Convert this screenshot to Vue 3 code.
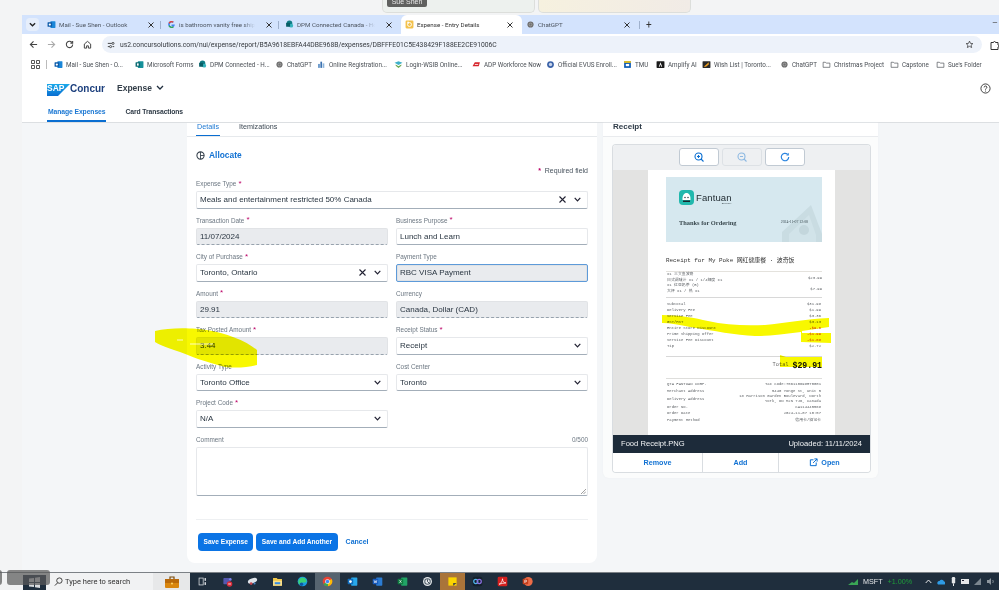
<script setup>
import { h } from 'vue'

const icons = {
  mail: [['rect',{x:6,y:2,width:9,height:12,rx:1,fill:'#1a86d8'}],['rect',{x:1,y:4,width:8,height:8,rx:1,fill:'#0c5aa8'}],['circle',{cx:5,cy:8,r:2,fill:'#fff'}]],
  google: [['path',{d:'M14 8.2H8v2.4h3.4A3.6 3.6 0 1 1 10.4 5l1.7-1.7A6 6 0 1 0 14 8.2z',fill:'#4285f4'}],['path',{d:'M2.6 5.2 4.7 6.8A3.6 3.6 0 0 1 10.4 5l1.7-1.7a6 6 0 0 0-9.500 1.900z',fill:'#ea4335'}],['path',{d:'M2.600 10.800 4.700 9.200a3.600 3.600 0 0 0 5.700 1.800l1.700 1.700a6 6 0 0 1-9.500-1.900z',fill:'#34a853'}]],
  share: [['circle',{cx:8,cy:6,r:5,fill:'#0f7c85'}],['circle',{cx:11,cy:10,r:3.500,fill:'#36b3bd'}],['rect',{x:2,y:5,width:7,height:7,rx:1,fill:'#075e66'}]],
  concur: [['rect',{x:1,y:1,width:14,height:14,rx:2,fill:'#f3c24d'}],['circle',{cx:8,cy:8,r:3.500,fill:'none',stroke:'#fff','stroke-width':1.600}],['rect',{x:4,y:3,width:3,height:3,fill:'#fff'}]],
  gpt: [['circle',{cx:8,cy:8,r:5.500,fill:'#6f6f6f'}],['circle',{cx:8,cy:8,r:2.500,fill:'none',stroke:'#bbb','stroke-width':1}]],
  forms: [['rect',{x:5,y:2,width:10,height:12,rx:1,fill:'#16909a'}],['rect',{x:1,y:4,width:8,height:8,rx:1,fill:'#0b6a72'}],['rect',{x:3.500,y:6,width:3,height:4,fill:'#fff'}]],
  reg: [['rect',{x:2,y:7,width:3,height:7,fill:'#5a8fc6'}],['rect',{x:6,y:3,width:3,height:11,fill:'#3b72b0'}],['rect',{x:10,y:6,width:3,height:8,fill:'#8db4da'}]],
  wsib: [['path',{d:'M1 5 8 2l7 3-7 4z',fill:'#3eb0c9'}],['path',{d:'M3 8l5 3 5-3v2l-5 4-5-4z',fill:'#6aa84f'}]],
  adp: [['path',{d:'M1 11 5 4h9l-2 7z',fill:'#d6232a'}],['rect',{x:5,y:7,width:6,height:1.500,fill:'#fff'}]],
  evus: [['circle',{cx:8,cy:8,r:6,fill:'#3a62a8'}],['circle',{cx:8,cy:8,r:3,fill:'#c8d4ea'}]],
  tmu: [['rect',{x:2,y:2,width:12,height:12,fill:'#0d5bb5'}],['rect',{x:2,y:2,width:12,height:3,fill:'#f6c915'}],['rect',{x:5,y:7,width:6,height:4,fill:'#fff'}]],
  amp: [['rect',{x:1,y:2,width:14,height:12,rx:1,fill:'#1c1c1c'}],['path',{d:'M8 4 5 12h1.500L8 8l1.500 4H11z',fill:'#fff'}]],
  wish: [['rect',{x:1,y:2,width:14,height:12,rx:1,fill:'#2a2a2a'}],['path',{d:'M3 12 12 4v4l-5 4z',fill:'#f0a020'}]],
  folder: [['path',{d:'M2 4h4l1.500 1.500H14v7.500H2z',fill:'none',stroke:'#4a4f55','stroke-width':1.200}]],
  star: [['path',{d:'M8 2l1.800 4 4.200.4-3.200 2.800 1 4.200L8 11.200 4.200 13.400l1-4.200L2 6.400 6.200 6z',fill:'none',stroke:'#333','stroke-width':1.300}]],
  task: [['rect',{x:3,y:3,width:6,height:10,fill:'none',stroke:'#dfe3e7','stroke-width':1.100}],['rect',{x:11,y:3,width:2,height:4,fill:'#dfe3e7'}],['rect',{x:11,y:9,width:2,height:4,fill:'#dfe3e7'}]],
  teams: [['rect',{x:2,y:3,width:9,height:9,rx:1,fill:'#5558af'}],['circle',{cx:12,cy:5,r:2,fill:'#7b83eb'}],['circle',{cx:11,cy:11.500,r:4,fill:'#d92c3a'}],['rect',{x:9,y:11,width:4,height:1.200,fill:'#fff'}]],
  snip: [['ellipse',{cx:8,cy:7,rx:7,ry:3.500,fill:'#dfe4ea',transform:'rotate(-20 8 7)'}],['circle',{cx:6,cy:11,r:2,fill:'#c8474e'}],['circle',{cx:11,cy:11,r:1.500,fill:'#4a84c4'}]],
  files: [['path',{d:'M1.500 3H7l1 1.500h6.500V14h-13z',fill:'#f2c94c'}],['rect',{x:1.500,y:7,width:13,height:7,fill:'#fbe08a'}],['rect',{x:4,y:9,width:8,height:3,fill:'#3a8dde'}]],
  edge: [['circle',{cx:8,cy:8,r:7,fill:'#1b9de2'}],['path',{d:'M2 10a6 6 0 0 1 12-3c0 2-2 3-4 2.500-3-.5-5 1-5 3.500A6 6 0 0 1 2 10z',fill:'#3bd177'}],['circle',{cx:6.500,cy:12,r:2.500,fill:'#0c59a4'}]],
  chrome: [['circle',{cx:8,cy:8,r:7,fill:'#e94335'}],['path',{d:'M8 8 2 11.500A7 7 0 0 0 9 15z',fill:'#34a853'}],['path',{d:'M8 8l6-3.500A7 7 0 0 1 9 15z',fill:'#fbbc04'}],['circle',{cx:8,cy:8,r:3.400,fill:'#fff'}],['circle',{cx:8,cy:8,r:2.600,fill:'#4285f4'}]],
  outlook: [['rect',{x:6,y:2,width:9,height:12,rx:1,fill:'#28a8ea'}],['rect',{x:1,y:4,width:8,height:8,rx:1,fill:'#0f6cbd'}],['circle',{cx:5,cy:8,r:2,fill:'#fff'}]],
  word: [['rect',{x:6,y:2,width:9,height:12,rx:1,fill:'#2b7cd3'}],['rect',{x:1,y:4,width:8,height:8,rx:1,fill:'#185abd'}],['path',{d:'M3 6l1 4 1-3 1 3 1-4',stroke:'#fff','stroke-width':.8,fill:'none'}]],
  excel: [['rect',{x:6,y:2,width:9,height:12,rx:1,fill:'#21a366'}],['rect',{x:1,y:4,width:8,height:8,rx:1,fill:'#107c41'}],['path',{d:'M3.500 6l3 4m0-4-3 4',stroke:'#fff','stroke-width':.9}]],
  clock: [['circle',{cx:8,cy:8,r:6.500,fill:'#e5e8ea'}],['circle',{cx:8,cy:8,r:4,fill:'none',stroke:'#51606c','stroke-width':1.500}],['path',{d:'M8 5v3l3 3',stroke:'#24333f','stroke-width':1.200,fill:'none'}]],
  sticky: [['rect',{x:2,y:2,width:12,height:12,fill:'#fbd400'}],['path',{d:'M9 14v-4h5z',fill:'#444'}]],
  loop: [['rect',{x:1,y:1,width:14,height:14,rx:3,fill:'#13202b'}],['circle',{cx:5.500,cy:8,r:3,fill:'none',stroke:'#4fb4e8','stroke-width':1.800}],['circle',{cx:10.500,cy:8,r:3,fill:'none',stroke:'#8b6fe0','stroke-width':1.800}]],
  acrobat: [['rect',{x:1,y:1,width:14,height:14,rx:2,fill:'#d4201f'}],['path',{d:'M3 12c3-1 5-5 5-8 0 4 2 6 5 6-3 0-6 1-10 2z',fill:'none',stroke:'#fff','stroke-width':1.100}]],
  ppt: [['circle',{cx:9,cy:8,r:6.500,fill:'#ed6c47'}],['rect',{x:1,y:4,width:8,height:8,rx:1,fill:'#c43e1c'}],['path',{d:'M4 10V6h1.500a1.200 1.200 0 0 1 0 2.500H4',stroke:'#fff','stroke-width':.9,fill:'none'}]],
  bag: [['rect',{x:1,y:5,width:14,height:9,rx:1,fill:'#d9860f'}],['rect',{x:1,y:5,width:14,height:4,fill:'#b9690a'}],['path',{d:'M6 5V3h4v2',fill:'none',stroke:'#7a4a0a','stroke-width':1.200}],['circle',{cx:8,cy:9.500,r:1,fill:'#ffd76a'}]],
}
const Ico = (props) => h('svg', { width: props.size || 10, height: props.size || 10, viewBox: '0 0 16 16', style: 'flex:none;display:block' }, (icons[props.name] || []).map(([t, a]) => h(t, a)))
Ico.props = ['name', 'size']

const tabs = [
  { t: 'Mail - Sue Shen - Outlook', i: 'mail', w: 120 },
  { t: 'is bathroom vanity free shipping', i: 'google', w: 118 },
  { t: 'DPM Connected Canada - Home', i: 'share', w: 120 },
  { t: 'Expense - Entry Details', i: 'concur', w: 121, on: true },
  { t: 'ChatGPT', i: 'gpt', w: 117 },
]
const marks = [
  { t: 'Mail - Sue Shen - O...', i: 'mail', w: 81 },
  { t: 'Microsoft Forms', i: 'forms', w: 63 },
  { t: 'DPM Connected - H...', i: 'share', w: 77 },
  { t: 'ChatGPT', i: 'gpt', w: 42 },
  { t: 'Online Registration...', i: 'reg', w: 77 },
  { t: 'Login-WSIB Online...', i: 'wsib', w: 78 },
  { t: 'ADP Workforce Now', i: 'adp', w: 74 },
  { t: 'Official EVUS Enroll...', i: 'evus', w: 77 },
  { t: 'TMU', i: 'tmu', w: 33 },
  { t: 'Amplify AI', i: 'amp', w: 46 },
  { t: 'Wish List | Toronto...', i: 'wish', w: 78 },
  { t: 'ChatGPT', i: 'gpt', w: 42 },
  { t: 'Christmas Project', i: 'folder', w: 68 },
  { t: 'Capstone', i: 'folder', w: 46 },
  { t: "Sue's Folder", i: 'folder', w: 50 },
]
const fields = [
  { l: 'Transaction Date', req: 1, v: '11/07/2024', k: 'off' },
  { l: 'Business Purpose', req: 1, v: 'Lunch and Learn', k: 'text' },
  { l: 'City of Purchase', req: 1, v: 'Toronto, Ontario', k: 'sel', x: 1 },
  { l: 'Payment Type', v: 'RBC VISA Payment', k: 'focus' },
  { l: 'Amount', req: 1, v: '29.91', k: 'off' },
  { l: 'Currency', v: 'Canada, Dollar (CAD)', k: 'off' },
  { l: 'Tax Posted Amount', req: 1, v: '3.44', k: 'off' },
  { l: 'Receipt Status', req: 1, v: 'Receipt', k: 'sel' },
  { l: 'Activity Type', v: 'Toronto Office', k: 'sel' },
  { l: 'Cost Center', v: 'Toronto', k: 'sel' },
  { l: 'Project Code', req: 1, v: 'N/A', k: 'sel' },
]
const summary = [
  ['Subtotal', '$31.98'], ['Delivery Fee', '$1.99'], ['Service Fee', '$3.36'], ['GST/HST', '$3.13'],
  ['Entire Store Discount', '-$9.6', 1], ['Prime Shipping Offer', '-$1.99', 1], ['Service Fee Discount', '-$1.68', 1], ['Tip', '$2.72'],
]
const meta = [
  ['QTA FANTUAN CORP.', 'Tax Code:756110698RT0001'], ['Merchant Address', '5440 Yonge St, Unit 5'],
  ['Delivery Address', '18 Harrison Garden Boulevard, North York, ON M2N 7J6, Canada'],
  ['Order No.', 'CA114445568'], ['Order Date', '2024-11-07 10:57'], ['Payment Method', '信用卡/借记卡'],
]
const dock = ['task', 'teams', 'snip', 'files', 'edge', 'chrome', 'outlook', 'word', 'excel', 'clock', 'sticky', 'loop', 'acrobat', 'ppt']
</script>

<template>
  <div class="screen">
    <div class="thumbs">
      <div class="thumb thumb-a"><span class="tip">Sue Shen</span></div>
      <div class="thumb thumb-b"></div>
    </div>

    <div class="window">
      <div class="tabstrip">
        <span class="tabmenu"><svg width="7" height="7" viewBox="0 0 8 8"><path d="M1 2.500 4 5.500 7 2.500" fill="none" stroke="#222" stroke-width="1.500"/></svg></span>
        <div v-for="tab in tabs" :key="tab.t" class="tab" :class="{ on: tab.on }" :style="{ width: tab.w + 'px' }">
          <Ico :name="tab.i" :size="9" />
          <span class="tabtitle">{{ tab.t }}</span>
          <svg class="tabx" width="6" height="6" viewBox="0 0 6 6"><path d="M.5.500l5 5m0-5-5 5" stroke="#333" stroke-width="1"/></svg>
        </div>
        <span class="plus">+</span>
        <span class="minim">–</span>
      </div>

      <div class="toolbar">
        <svg width="9" height="9" viewBox="0 0 10 10" class="nav n1"><path d="M9 5H1.500M5 1.500 1.500 5 5 8.500" fill="none" stroke="#444" stroke-width="1.200"/></svg>
        <svg width="9" height="9" viewBox="0 0 10 10" class="nav n2"><path d="M1 5h7.500M5 1.500 8.500 5 5 8.500" fill="none" stroke="#aaa" stroke-width="1.200"/></svg>
        <svg width="9" height="9" viewBox="0 0 10 10" class="nav n2"><path d="M8.500 5a3.500 3.500 0 1 1-1-2.500M8.500 1v2.500H6" fill="none" stroke="#444" stroke-width="1.200"/></svg>
        <svg width="9" height="9" viewBox="0 0 10 10" class="nav n2"><path d="M1.500 4.500 5 1.500l3.500 3V9H6V6.500H4V9H1.500z" fill="none" stroke="#444" stroke-width="1.100"/></svg>
        <div class="address">
          <svg width="8" height="8" viewBox="0 0 10 10"><path d="M1 3h5M1 7h2M7 7h2" stroke="#333" stroke-width="1.100"/><circle cx="7.500" cy="3" r="1.300" fill="none" stroke="#333"/><circle cx="4.500" cy="7" r="1.300" fill="none" stroke="#333"/></svg>
          <span class="url">us2.concursolutions.com/nui/expense/report/B5A9618EBFA44DBE968B/expenses/DBFFFE01C5E438429F188EE2CE91006C</span>
          <Ico name="star" :size="9" />
        </div>
        <svg class="ext" width="10" height="10" viewBox="0 0 10 10"><path d="M1 2.500h2.500a1 1 0 0 1 2 0H8V5a1 1 0 0 1 0 2v2.500H1z" fill="none" stroke="#333" stroke-width="1"/></svg>
      </div>

      <div class="bookmarks">
        <svg class="apps" width="9" height="9" viewBox="0 0 9 9"><path d="M.5.500h3v3h-3zM5.500.500h3v3h-3zM.5 5.500h3v3h-3zM5.500 5.500h3v3h-3z" fill="none" stroke="#444" stroke-width=".9"/></svg>
        <span class="bsep"></span>
        <div v-for="(m, idx) in marks" :key="idx" class="mark" :style="{ width: m.w + 'px' }">
          <Ico :name="m.i" :size="9" /><span>{{ m.t }}</span>
        </div>
      </div>

      <header class="apphead">
        <div class="brand">
          <div class="logo"><svg width="23" height="12" viewBox="0 0 23 12"><defs><linearGradient id="sapg" x1="0" x2="0" y1="0" y2="1"><stop offset="0" stop-color="#19a9ea"/><stop offset="1" stop-color="#0a6ed1"/></linearGradient></defs><path d="M0 0h23L11 12H0z" fill="url(#sapg)"/></svg><span class="saptxt">SAP</span></div>
          <span class="concur">Concur</span>
          <span class="product">Expense</span>
          <svg width="8" height="6" viewBox="0 0 8 6"><path d="M1 1l3 3 3-3" fill="none" stroke="#1f2d3d" stroke-width="1.300"/></svg>
          <svg class="help" width="11" height="11" viewBox="0 0 12 12"><circle cx="6" cy="6" r="5" fill="none" stroke="#333" stroke-width="1"/><path d="M4.500 4.800a1.500 1.500 0 1 1 2.200 1.300c-.5.300-.7.600-.7 1.100" fill="none" stroke="#333"/><circle cx="6" cy="8.800" r=".6" fill="#333"/></svg>
        </div>
        <nav class="appnav">
          <span class="navitem active">Manage Expenses</span>
          <span class="navitem">Card Transactions</span>
        </nav>
      </header>

      <main class="content">
        <section class="formpanel">
          <div class="paneltabs">
            <span class="ptab active">Details</span>
            <span class="ptab">Itemizations</span>
          </div>
          <div class="allocate">
            <svg width="9" height="9" viewBox="0 0 10 10"><circle cx="5" cy="5" r="4" fill="none" stroke="#39444f" stroke-width="1.200"/><path d="M5 1v8M5 5h4" stroke="#39444f" stroke-width="1"/></svg>
            <span>Allocate</span>
          </div>
          <div class="required"><i>*</i> Required field</div>
          <div class="field full">
            <label>Expense Type<i>*</i></label>
            <div class="control sel"><span>Meals and entertainment restricted 50% Canada</span>
              <svg class="cross" width="7" height="7" viewBox="0 0 7 7"><path d="M.5.500l6 6m0-6-6 6" stroke="#223" stroke-width="1.100"/></svg>
              <svg class="chev" width="7" height="5" viewBox="0 0 7 5"><path d="M.7.800 3.500 3.800 6.300.800" fill="none" stroke="#223" stroke-width="1.200"/></svg>
            </div>
          </div>
          <div class="grid">
            <div v-for="f in fields" :key="f.l" class="field">
              <label>{{ f.l }}<i v-if="f.req">*</i></label>
              <div class="control" :class="f.k"><span>{{ f.v }}</span>
                <svg v-if="f.x" class="cross" width="7" height="7" viewBox="0 0 7 7"><path d="M.5.500l6 6m0-6-6 6" stroke="#223" stroke-width="1.100"/></svg>
                <svg v-if="f.k === 'sel'" class="chev" width="7" height="5" viewBox="0 0 7 5"><path d="M.7.800 3.500 3.800 6.300.800" fill="none" stroke="#223" stroke-width="1.200"/></svg>
              </div>
            </div>
          </div>
          <div class="field full comment">
            <label>Comment <em>0/500</em></label>
            <div class="area"><svg width="5" height="5" viewBox="0 0 5 5"><path d="M5 0 0 5M5 2.500 2.500 5" stroke="#777" stroke-width=".7"/></svg></div>
          </div>
          <div class="actions">
            <button class="btn">Save Expense</button>
            <button class="btn">Save and Add Another</button>
            <span class="cancel">Cancel</span>
          </div>
        </section>

        <aside class="receiptpanel">
          <div class="rhead">Receipt</div>
          <div class="rcard">
            <div class="rtools">
              <button class="tool"><svg width="10" height="10" viewBox="0 0 10 10"><circle cx="4.500" cy="4.500" r="3.500" fill="none" stroke="#0a6ed1" stroke-width="1.100"/><path d="M7 7l2.500 2.500M3 4.500h3M4.500 3v3" stroke="#0a6ed1" stroke-width="1.100"/></svg></button>
              <button class="tool dim"><svg width="10" height="10" viewBox="0 0 10 10"><circle cx="4.500" cy="4.500" r="3.500" fill="none" stroke="#8db9e2" stroke-width="1.100"/><path d="M7 7l2.500 2.500M3 4.500h3" stroke="#8db9e2" stroke-width="1.100"/></svg></button>
              <button class="tool"><svg width="10" height="10" viewBox="0 0 10 10"><path d="M8.700 5a3.700 3.700 0 1 1-1.200-2.700" fill="none" stroke="#2b85e0" stroke-width="1.200"/><path d="M8.800.800v2.600H6.200z" fill="#2b85e0"/></svg></button>
            </div>
            <div class="rimage">
              <div class="paper">
                <div class="banner">
                  <div class="fan"><span class="fanlogo"><svg width="15" height="15" viewBox="0 0 15 15"><rect width="15" height="15" rx="4" fill="#21b8ad"/><path d="M7.500 3c2.500 0 4 2.500 4 5.500v1.500h-8V8.500C3.500 5.500 5 3 7.500 3z" fill="#fff"/><path d="M4 10.500h7V12H4z" fill="#16272e"/><circle cx="6" cy="7.500" r=".7" fill="#16272e"/><circle cx="9" cy="7.500" r=".7" fill="#16272e"/></svg></span><span class="fanword">Fantuan<small>Delivery</small></span></div>
                  <div class="thanks"><b>Thanks for Ordering</b><span>2024-11-07 12:08</span></div>
                  <svg class="money" width="40" height="37" viewBox="0 0 40 37"><path d="M0 37V27L29 0l11 29v8z" fill="#c9dce2"/><path d="M7 37v-8L27 10l7 20v7z" fill="#d1e3e9"/><circle cx="22" cy="25" r="5" fill="#c3d6dc"/></svg>
                </div>
                <div class="rtitle">Receipt for My Poke 网红健康餐 · 波奇饭</div>
                <div class="thick"></div>
                <div class="line2"><div><p>x1 三文鱼波奇</p><p>日式调味汁 x1 / 1/4辣度 x1</p></div><span>$23.99</span></div>
                <div class="line2"><div><p>x1 红豆奶茶 (B)</p><p>大杯 x1 / 热 x1</p></div><span>$7.99</span></div>
                <div class="thin"></div>
                <div v-for="s in summary" :key="s[0]" class="sumrow"><span>{{ s[0] }}</span><span :class="{ neg: s[2] }">{{ s[1] }}</span></div>
                <div class="thin gapline"></div>
                <div class="total"><span>Total</span><b>$29.91</b></div>
                <div class="thick soft"></div>
                <div v-for="m in meta" :key="m[0]" class="metarow"><span>{{ m[0] }}</span><span class="metav">{{ m[1] }}</span></div>
              </div>
            </div>
            <div class="rfoot"><span>Food Receipt.PNG</span><span>Uploaded: 11/11/2024</span></div>
            <div class="ractions">
              <span class="ract a1">Remove</span>
              <span class="ract a2">Add</span>
              <span class="ract a3"><svg width="9" height="9" viewBox="0 0 10 10"><path d="M5 2H1.500v6.500H8V5M6 1h3v3M9 1 4.500 5.500" fill="none" stroke="#0a6ed1" stroke-width="1.100"/></svg>Open</span>
            </div>
          </div>
        </aside>
      </main>
    </div>

    <footer class="taskbar">
      <div class="startzone">
        <span class="start"><svg width="13" height="13" viewBox="0 0 13 13"><path d="M1 2.500 6 2v4H1zM7 1.800 12 1v5H7zM1 7h5v4l-5-.6zM7 7h5v5l-5-.8z" fill="#d9dcdf"/></svg></span>
        <svg class="lens" width="9" height="9" viewBox="0 0 10 10"><circle cx="6" cy="4" r="3" fill="none" stroke="#333" stroke-width="1"/><path d="M4 6.500 1 9.500" stroke="#333" stroke-width="1.100"/></svg>
        <span class="search">Type here to search</span>
        <span class="bagtile"><Ico name="bag" :size="16" /></span>
      </div>
      <div class="dock">
        <span v-for="d in dock" :key="d" class="dockitem" :class="{ lit: d === 'chrome', warm: d === 'sticky' }"><Ico :name="d" :size="11" /></span>
      </div>
      <div class="tray">
        <svg width="12" height="8" viewBox="0 0 12 8"><path d="M0 7l4-3 2 1 4-4v6z" fill="#3aa655"/></svg>
        <span class="stock">MSFT</span><span class="pct">+1.00%</span>
        <svg class="tr1" width="7" height="5" viewBox="0 0 7 5"><path d="M.7 4 3.500 1 6.300 4" fill="none" stroke="#e6e8ea"/></svg>
        <svg class="tr2" width="8" height="6" viewBox="0 0 8 6"><path d="M1 5.500h6a1.500 1.500 0 0 0 0-3 2.500 2.500 0 0 0-4.500-.5A2 2 0 0 0 1 5.500z" fill="#2e9be6"/></svg>
        <svg class="tr3" width="5" height="9" viewBox="0 0 5 9"><rect x=".8" y="0" width="3.400" height="6.500" rx="1.200" fill="#e4e6e8"/><path d="M2.500 6.500V9" stroke="#e4e6e8"/></svg>
        <svg class="tr4" width="8" height="6" viewBox="0 0 8 6"><rect width="8" height="5" fill="#e4e6e8"/><rect x="1" y="1" width="2" height="1" fill="#223"/></svg>
        <svg class="tr5" width="8" height="7" viewBox="0 0 8 7"><path d="M0 7 7 0v7z" fill="#7b868f"/></svg>
        <svg class="tr6" width="8" height="7" viewBox="0 0 8 7"><path d="M0 2h2l2-2v7L2 5H0z" fill="#8d969e"/><path d="M5.500 2c1 1 1 2 0 3" fill="none" stroke="#8d969e"/></svg>
        <span class="clock">1<br>11</span>
      </div>
    </footer>

    <span class="ghost ghost-a"></span>
    <span class="ghost ghost-b"></span>

    <svg class="marker" width="999" height="590" viewBox="0 0 999 590">
      <g fill="#f8f800">
        <path d="M155 331C170 327 195 328 207 330 225 333 245 340 257 350V365C245 368 235 368 225 367 205 362 190 356 180 352 170 349 160 345 155 342z"/>
        <path d="M662 315C680 315 695 318 708 321 725 325 745 326 765 325 785 323 805 319 829 318V327L802 331V333H831V343L801 342V332C785 334 770 336 755 336 735 335 715 331 690 327 680 325 670 323 662 323z"/>
        <path d="M780 355 786 357H822V367H780z"/>
      </g>
    </svg>
    <svg class="dash" width="40" height="8" viewBox="0 0 40 8"><path d="M1 1h6M14 5h23" stroke="#fff" stroke-width="1" opacity=".75"/></svg>
  </div>
</template>

<style>
html, body { margin: 0; padding: 0; background: #f3f4f5; }
</style>

<style scoped>
.screen { position: relative; width: 999px; height: 590px; overflow: hidden; display: flex; flex-direction: column; background: #f3f4f5; font-family: "Liberation Sans", Arial, sans-serif; color: #26323d; filter: blur(.4px); }
svg { flex: none; }
.thumbs { height: 15px; display: flex; gap: 3px; padding-left: 382px; box-sizing: border-box; flex: none; }
.thumb { width: 153px; height: 13px; border: 1px solid #dcdedb; border-top: 0; border-radius: 0 0 5px 5px; box-sizing: border-box; }
.thumb-a { background: #edf1ee; }
.thumb-b { background: linear-gradient(90deg, #f6f1df, #f1ebe6); }
.tip { display: block; width: 40px; height: 7px; margin-left: 4px; background: #60615f; color: #e8e8e8; font-size: 7px; line-height: 3px; text-align: center; border-radius: 0 0 2px 2px; overflow: hidden; }
.window { margin-left: 22px; height: 557px; flex: none; display: flex; flex-direction: column; background: #f4f6f8; }
.tabstrip { height: 19px; flex: none; display: flex; align-items: center; background: #d3e3fd; padding-left: 4px; font-family: "Roboto", sans-serif; position: relative; }
.tabmenu { width: 13px; height: 13px; background: #e6eefb; border-radius: 4px; display: flex; align-items: center; justify-content: center; margin-right: 4px; flex: none; }
.tab { height: 19px; flex: none; box-sizing: border-box; display: flex; align-items: center; padding: 0 9px 0 4px; font-size: 6.200px; color: #4d5560; gap: 3px; position: relative; }
.tab + .tab::before { content: ""; position: absolute; left: -3px; top: 6px; height: 8px; width: 1px; background: #9fb1cd; }
.tab.on { background: #fff; border-radius: 6px 6px 0 0; height: 19px; color: #333; }
.tab.on::before, .tab.on + .tab::before { display: none; }
.tabtitle { flex: 1; overflow: hidden; white-space: nowrap; min-width: 0; -webkit-mask-image: linear-gradient(90deg, #000 85%, transparent); mask-image: linear-gradient(90deg, #000 85%, transparent); }
.tabx { margin-left: 8px; }
.plus { margin-left: 0; padding-left: 6px; border-left: 1px solid #9fb1cd; font-size: 10px; line-height: 8px; color: #333; }
.minim { position: absolute; right: 1px; top: 3px; font-size: 9px; color: #555; }
.toolbar { height: 21px; flex: none; background: #fff; display: flex; align-items: center; padding-left: 7px; }
.nav { margin-right: 9px; }
.address { width: 880px; flex: none; height: 17px; margin-left: 1px; border-radius: 9px; background: #edf2fa; display: flex; align-items: center; padding: 0 8px 0 5px; box-sizing: border-box; margin-right: 8px; }
.url { flex: 1; margin-left: 5px; font-size: 6.750px; font-family: "Roboto", sans-serif; color: #35393e; white-space: nowrap; }
.bookmarks { height: 19px; flex: none; background: #fff; display: flex; align-items: center; padding-left: 9px; font-family: "Roboto", sans-serif; font-size: 6.300px; color: #4a4f55; }
.bsep { width: 1px; height: 9px; background: #bbb; margin: 0 7px 0 6px; }
.mark { flex: none; display: flex; align-items: center; gap: 3px; white-space: nowrap; overflow: hidden; }
.apphead { height: 48px; flex: none; background: #fff; border-bottom: 1px solid #dcdfe2; display: flex; flex-direction: column; }
.brand { height: 28px; display: flex; align-items: center; padding-left: 25px; box-sizing: border-box; }
.logo { position: relative; width: 23px; height: 12px; flex: none; }
.saptxt { position: absolute; left: 0; top: 1px; font-size: 8.500px; line-height: 10px; font-weight: 700; color: #fff; }
.concur { font-size: 10px; font-weight: 700; color: #1c3f7d; width: 47px; flex: none; }
.product { font-size: 8.500px; font-weight: 700; color: #333e49; margin-right: 4px; }
.help { margin-left: auto; margin-right: 8px; }
.appnav { height: 20px; display: flex; padding-left: 25px; font-size: 6.800px; font-weight: 700; gap: 18px; }
.navitem { height: 20px; line-height: 19px; padding: 0 1px; box-sizing: border-box; color: #2e3a46; letter-spacing: -.1px; white-space: nowrap; }
.navitem.active { color: #1c78d3; border-bottom: 2px solid #0a6ed1; }
.content { flex: 1; min-height: 0; display: flex; align-items: flex-start; gap: 6px; padding-left: 165px; }
.formpanel { width: 410px; height: 440px; flex: none; background: #fff; border-radius: 0 0 8px 8px; padding: 0 9px; box-sizing: border-box; }
.paneltabs { height: 14px; margin: 0 -9px; padding-left: 9px; border-bottom: 1px solid #e6e9ec; display: flex; gap: 18px; box-sizing: border-box; font-size: 7.200px; color: #3c4854; line-height: 7px; }
.ptab { height: 13px; padding: 0 1px; box-sizing: border-box; width: 24px; white-space: nowrap; }
.ptab.active { color: #1c78d3; border-bottom: 1px solid #0a6ed1; }
.allocate { margin-top: 11px; height: 14px; display: flex; align-items: center; gap: 4px; color: #1272d3; font-size: 8.400px; font-weight: 700; }
.required { margin-top: 4px; height: 10px; text-align: right; font-size: 7px; line-height: 10px; color: #47525d; }
.required i { color: #bb0066; font-style: normal; font-weight: 700; margin-right: 2px; }
.field { min-width: 0; }
.grid { display: grid; grid-template-columns: 192px 192px; gap: 4px 8px; margin-top: 4px; }
label { display: flex; align-items: center; gap: 2px; height: 15px; font-size: 6.400px; color: #6c7782; white-space: pre; }
label i { color: #bb0066; font-style: normal; font-size: 8px; line-height: 6px; align-self: center; }
label em { margin-left: auto; font-style: normal; }
.control { height: 17.500px; box-sizing: border-box; display: flex; align-items: center; padding: 0 6px 0 3px; font-size: 8px; color: #2a3642; background: #fff; border: 1px solid #e6e8eb; border-bottom: 1px solid #a3aeb9; border-radius: 2px; }
.control > span { flex: 1; white-space: nowrap; }
.control.off { background: #e9ebee; border-color: #e1e3e6; border-bottom: 1px dashed #97a2ad; }
.control.focus { background: #e9ebee; border: 1px solid #5d9ad9; box-shadow: inset 0 0 0 1px #dfe2e5; }
.cross { margin-right: 8px; }
.comment { margin-top: 4px; }
.area { height: 49px; box-sizing: border-box; background: #fff; border: 1px solid #e6e8eb; border-bottom: 1px solid #a3aeb9; border-radius: 2px; display: flex; align-items: flex-end; justify-content: flex-end; padding: 0 1px 1px 0; }
.actions { margin-top: 23px; border-top: 1px solid #eef0f2; padding: 13px 0 0 2px; display: flex; align-items: center; gap: 3px; }
.btn { height: 18px; border: 0; border-radius: 4px; background: #0b74e5; color: #fff; font: 700 6.600px "Liberation Sans", sans-serif; padding: 0 5.500px; white-space: nowrap; }
.cancel { margin-left: 5px; color: #1272d3; font-size: 7px; font-weight: 700; }
.receiptpanel { width: 275px; height: 355px; flex: none; background: #fbfcfc; border-radius: 0 0 6px 6px; box-shadow: 0 0 2px #edeff1; }
.rhead { height: 14px; background: #fff; border-bottom: 1px solid #e9ebee; box-sizing: border-box; padding-left: 10px; font-size: 8px; font-weight: 700; line-height: 7px; color: #2d3a47; }
.rcard { width: 257px; height: 327px; margin: 7.500px 0 0 10px; display: flex; flex-direction: column; border-radius: 3px; overflow: hidden; box-shadow: 0 0 0 1px #d9dde1; background: #fff; }
.rtools { height: 25px; flex: none; background: #eef0f2; display: flex; justify-content: center; align-items: center; gap: 3px; }
.tool { width: 40px; height: 18px; box-sizing: border-box; background: #fff; border: 1px solid #c1cad3; border-radius: 3px; padding: 0; display: flex; align-items: center; justify-content: center; }
.tool.dim { background: #eef0f2; border-color: #dde1e5; }
.rimage { height: 265px; flex: none; background: #e3e3e2; padding-left: 35px; overflow: hidden; }
.paper { width: 187px; height: 265px; background: #fff; padding: 7px 13px 0 18px; box-sizing: border-box; overflow: hidden; font-family: "Liberation Mono", "Noto Sans CJK SC", monospace; font-size: 3.900px; color: #5d6165; }
.banner { position: relative; width: 156px; height: 65px; background: #d6e8ef; overflow: hidden; font-family: "Liberation Sans", sans-serif; }
.fan { display: flex; align-items: center; gap: 2px; padding: 13px 0 0 13px; }
.fanlogo { display: block; height: 15px; }
.fanword { display: block; font-size: 9.500px; line-height: 11px; color: #222d33; letter-spacing: .1px; position: relative; }
.fanword small { position: absolute; right: 0; top: 10px; font-size: 2.500px; line-height: 3px; }
.thanks { display: flex; justify-content: space-between; align-items: center; padding: 14px 14px 0 13px; position: relative; z-index: 1; }
.thanks b { font: 700 6.400px "Liberation Serif", serif; color: #3b4a50; }
.thanks span { font: 3.800px "Liberation Serif", serif; color: #3b4a50; }
.money { position: absolute; right: 0; bottom: 0; }
.rtitle { margin-top: 14px; height: 10px; line-height: 10px; font-size: 5.900px; color: #333; white-space: nowrap; }
.thick { height: 1.500px; background: #e4e2dd; margin-top: 5px; }
.line2 { display: flex; justify-content: space-between; align-items: center; height: 11px; padding-left: 1px; }
.line2:first-of-type { margin-top: 3px; }
.line2 p { margin: 0; line-height: 5.400px; white-space: nowrap; }
.thin { height: 1px; background: #d8d8d8; margin-top: 3px; margin-bottom: 3px; }
.sumrow { display: flex; justify-content: space-between; height: 6px; line-height: 6px; padding: 0 1px; }
.neg { color: #d92c16; }
.gapline { margin-top: 7px; margin-bottom: 0; }
.total { height: 20.500px; padding-bottom: 4px; box-sizing: border-box; display: flex; justify-content: flex-end; align-items: center; gap: 4px; color: #666; font-size: 5.300px; }
.total b { font-size: 8.200px; color: #111; }
.soft { margin: 0 0 3px; background: #dededc; }
.metarow { display: flex; justify-content: space-between; align-items: center; min-height: 5.800px; padding: 0 1px; line-height: 5px; margin-top: .4px; }
.metav { max-width: 95px; text-align: right; }
.rfoot { height: 18px; flex: none; background: #1d2b3a; color: #f1f3f5; display: flex; justify-content: space-between; align-items: center; padding: 0 8px; font-size: 7.600px; }
.ractions { height: 19px; flex: none; display: flex; background: #fff; }
.ract { display: flex; align-items: center; justify-content: center; gap: 3px; color: #1272d3; font-size: 7.200px; font-weight: 700; border-right: 1px solid #d9dde1; box-sizing: border-box; }
.a1 { width: 90px; }
.a2 { width: 76px; }
.a3 { flex: 1; border-right: 0; }
.taskbar { height: 18px; flex: none; display: flex; background: #1f2e3d; border-top: 1px solid #7c8186; box-sizing: border-box; }
.startzone { width: 190px; flex: none; display: flex; align-items: center; background: #f1f2f3; height: 17px; position: relative; }
.start { width: 23px; height: 15px; margin: 2px 0 0 23px; background: #1f2e3d; display: flex; align-items: center; justify-content: center; flex: none; }
.lens { margin-left: 8px; }
.search { margin-left: 2px; font: 7.500px "Roboto", sans-serif; color: #333; white-space: nowrap; }
.bagtile { position: absolute; left: 153px; top: 0; width: 37px; height: 17px; background: #e7e8e9; display: flex; align-items: center; justify-content: center; }
.dock { display: flex; flex: none; }
.dockitem { width: 25px; height: 17px; display: flex; align-items: center; justify-content: center; flex: none; }
.dockitem.lit { background: #566470; }
.dockitem.warm { background: #a9743a; }
.tray { flex: 1; display: flex; align-items: center; padding-left: 308px; color: #e6e8ea; font-size: 7.200px; min-width: 0; }
.stock { margin-left: 3px; }
.pct { margin-left: 5px; color: #1f9e3a; }
.tr1 { margin-left: 13px; }
.tr2, .tr4, .tr5, .tr6 { margin-left: 5px; }
.tr3 { margin-left: 6px; }
.clock { margin-left: 7px; font-size: 5px; line-height: 6px; white-space: nowrap; }
.ghost { position: absolute; top: 570px; height: 15px; background: rgba(90, 90, 90, .72); border-radius: 3px; }
.ghost-a { left: 7px; width: 43px; }
.ghost-b { left: -6px; width: 8px; }
.marker { position: absolute; left: 0; top: 0; mix-blend-mode: multiply; pointer-events: none; }
.dash { position: absolute; left: 176px; top: 339px; pointer-events: none; }
</style>
